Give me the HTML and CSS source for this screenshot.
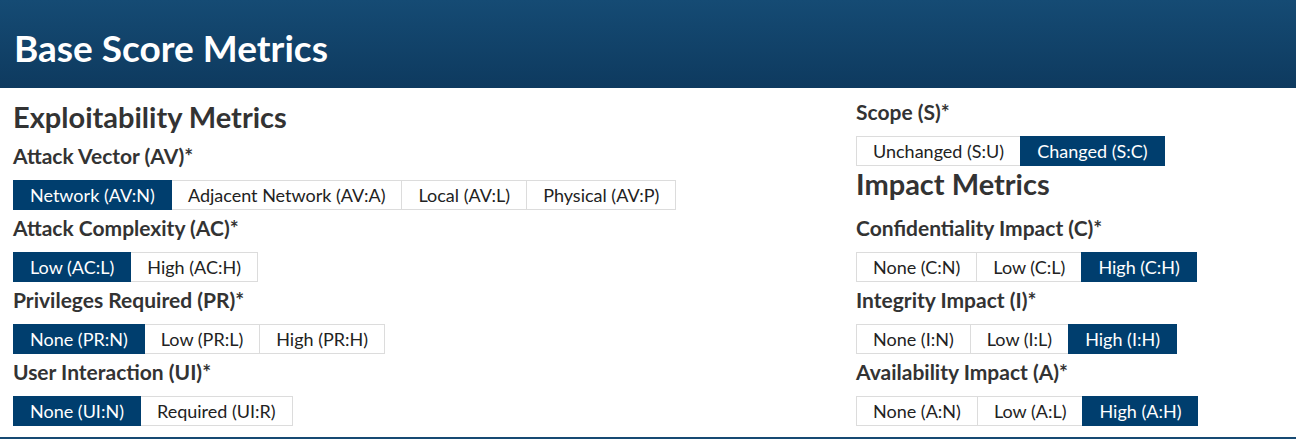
FILE: index.html
```html
<!DOCTYPE html>
<html lang="en">
<head>
<meta charset="utf-8">
<title>Base Score Metrics</title>
<link rel="stylesheet" href="styles.css">
</head>
<body>
<header class="banner">
  <h2 class="banner-title">Base Score Metrics</h2>
</header>
<main class="metrics">
  <section class="col col-left">
    <h3 class="section-title">Exploitability Metrics</h3>
    <div class="group">
      <div class="label">Attack Vector (AV)*</div>
      <div class="btns">
        <span class="btn active">Network (AV:N)</span><span class="btn">Adjacent Network (AV:A)</span><span class="btn">Local (AV:L)</span><span class="btn">Physical (AV:P)</span>
      </div>
    </div>
    <div class="group">
      <div class="label">Attack Complexity (AC)*</div>
      <div class="btns">
        <span class="btn active">Low (AC:L)</span><span class="btn">High (AC:H)</span>
      </div>
    </div>
    <div class="group">
      <div class="label">Privileges Required (PR)*</div>
      <div class="btns">
        <span class="btn active">None (PR:N)</span><span class="btn">Low (PR:L)</span><span class="btn">High (PR:H)</span>
      </div>
    </div>
    <div class="group">
      <div class="label">User Interaction (UI)*</div>
      <div class="btns">
        <span class="btn active">None (UI:N)</span><span class="btn">Required (UI:R)</span>
      </div>
    </div>
  </section>
  <section class="col col-right">
    <div class="group group-scope">
      <div class="label">Scope (S)*</div>
      <div class="btns">
        <span class="btn">Unchanged (S:U)</span><span class="btn active">Changed (S:C)</span>
      </div>
    </div>
    <h3 class="section-title section-impact">Impact Metrics</h3>
    <div class="group">
      <div class="label">Confidentiality Impact (C)*</div>
      <div class="btns">
        <span class="btn">None (C:N)</span><span class="btn">Low (C:L)</span><span class="btn active">High (C:H)</span>
      </div>
    </div>
    <div class="group">
      <div class="label">Integrity Impact (I)*</div>
      <div class="btns">
        <span class="btn">None (I:N)</span><span class="btn">Low (I:L)</span><span class="btn active">High (I:H)</span>
      </div>
    </div>
    <div class="group">
      <div class="label">Availability Impact (A)*</div>
      <div class="btns">
        <span class="btn">None (A:N)</span><span class="btn">Low (A:L)</span><span class="btn active">High (A:H)</span>
      </div>
    </div>
  </section>
</main>
</body>
</html>
```
FILE: styles.css
```css
html, body {
  margin: 0;
  padding: 0;
  background: #ffffff;
}
body {
  font-family: Lato, "Liberation Sans", sans-serif;
  color: #333333;
}
.banner {
  height: 88px;
  background: linear-gradient(to bottom, #154b74 0%, #0e3a5f 100%);
  display: flex;
  align-items: flex-start;
}
.banner-title {
  margin: 0;
  padding: 28px 0 0 14px;
  font-size: 37px;
  line-height: 40px;
  font-weight: 700;
  color: #ffffff;
}
.metrics {
  display: grid;
  grid-template-columns: 843px 1fr;
  padding: 13px 13px 4px 13px;
  border-bottom: 2px solid #174a73;
}
.col {
  display: flex;
  flex-direction: column;
  align-items: flex-start;
}
.section-title {
  margin: 0 0 12px 0;
  font-size: 29px;
  line-height: 32px;
  font-weight: 700;
  color: #333333;
}
.section-impact {
  margin-bottom: 17px;
}
.group {
  display: flex;
  flex-direction: column;
  align-items: flex-start;
  margin-bottom: 7px;
}
.group-scope {
  margin-bottom: 2px;
}
.label {
  font-size: 21px;
  line-height: 22px;
  font-weight: 700;
  color: #333333;
  margin-bottom: 13px;
}
.btns {
  display: flex;
}
.btn {
  display: block;
  font-size: 18px;
  line-height: 28px;
  padding: 0 16px;
  border: 1px solid #dcdcdc;
  color: #222222;
  background: #ffffff;
  white-space: nowrap;
}
.btn + .btn {
  margin-left: -1px;
}
.btn.active {
  background: #003e6e;
  border-color: #003e6e;
  color: #ffffff;
  position: relative;
}
```
